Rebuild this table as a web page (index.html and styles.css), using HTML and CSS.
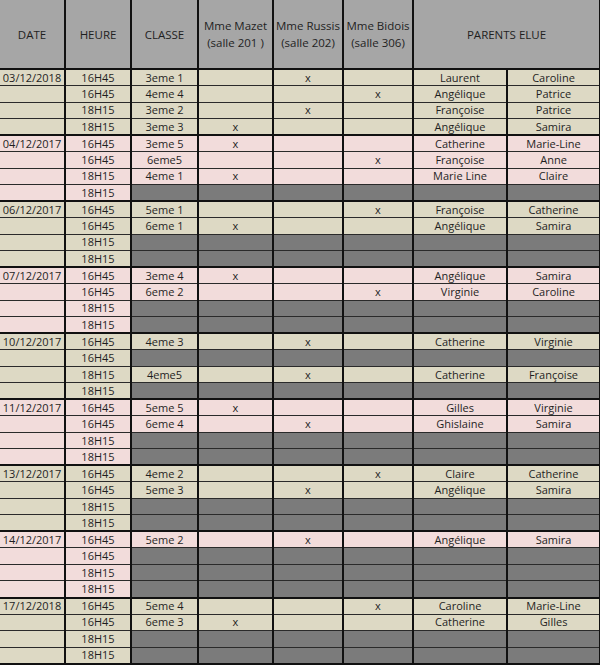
FILE: index.html
```html
<!DOCTYPE html>
<html lang="fr">
<head>
<meta charset="utf-8">
<title>Planning</title>
<link rel="stylesheet" href="styles.css">
</head>
<body>
<table class="plan">
  <colgroup>
    <col class="c-date"><col class="c-heure"><col class="c-classe"><col class="c-prof1"><col class="c-prof2"><col class="c-prof3"><col class="c-par1"><col class="c-par2">
  </colgroup>
  <thead>
    <tr class="head">
      <th>DATE</th><th>HEURE</th><th>CLASSE</th>
      <th>Mme Mazet<br>(salle 201 )</th><th>Mme Russis<br>(salle 202)</th><th>Mme Bidois<br>(salle 306)</th>
      <th colspan="2">PARENTS ELUE</th>
    </tr>
  </thead>
  <tbody class="beige">
    <tr class="first"><td>03/12/2018</td><td>16H45</td><td>3eme 1</td><td></td><td>x</td><td></td><td>Laurent</td><td>Caroline</td></tr>
    <tr><td></td><td>16H45</td><td>4eme 4</td><td></td><td></td><td>x</td><td>Angélique</td><td>Patrice</td></tr>
    <tr><td></td><td>18H15</td><td>3eme 2</td><td></td><td>x</td><td></td><td>Françoise</td><td>Patrice</td></tr>
    <tr><td></td><td>18H15</td><td>3eme 3</td><td>x</td><td></td><td></td><td>Angélique</td><td>Samira</td></tr>
  </tbody>
  <tbody class="pink">
    <tr class="first"><td>04/12/2017</td><td>16H45</td><td>3eme 5</td><td>x</td><td></td><td></td><td>Catherine</td><td>Marie-Line</td></tr>
    <tr><td></td><td>16H45</td><td>6eme5</td><td></td><td></td><td>x</td><td>Françoise</td><td>Anne</td></tr>
    <tr><td></td><td>18H15</td><td>4eme 1</td><td>x</td><td></td><td></td><td>Marie Line</td><td>Claire</td></tr>
    <tr class="off"><td></td><td>18H15</td><td></td><td></td><td></td><td></td><td></td><td></td></tr>
  </tbody>
  <tbody class="beige">
    <tr class="first"><td>06/12/2017</td><td>16H45</td><td>5eme 1</td><td></td><td></td><td>x</td><td>Françoise</td><td>Catherine</td></tr>
    <tr><td></td><td>16H45</td><td>6eme 1</td><td>x</td><td></td><td></td><td>Angélique</td><td>Samira</td></tr>
    <tr class="off"><td></td><td>18H15</td><td></td><td></td><td></td><td></td><td></td><td></td></tr>
    <tr class="off"><td></td><td>18H15</td><td></td><td></td><td></td><td></td><td></td><td></td></tr>
  </tbody>
  <tbody class="pink">
    <tr class="first"><td>07/12/2017</td><td>16H45</td><td>3eme 4</td><td>x</td><td></td><td></td><td>Angélique</td><td>Samira</td></tr>
    <tr><td></td><td>16H45</td><td>6eme 2</td><td></td><td></td><td>x</td><td>Virginie</td><td>Caroline</td></tr>
    <tr class="off"><td></td><td>18H15</td><td></td><td></td><td></td><td></td><td></td><td></td></tr>
    <tr class="off"><td></td><td>18H15</td><td></td><td></td><td></td><td></td><td></td><td></td></tr>
  </tbody>
  <tbody class="beige">
    <tr class="first"><td>10/12/2017</td><td>16H45</td><td>4eme 3</td><td></td><td>x</td><td></td><td>Catherine</td><td>Virginie</td></tr>
    <tr class="off"><td></td><td>16H45</td><td></td><td></td><td></td><td></td><td></td><td></td></tr>
    <tr><td></td><td>18H15</td><td>4eme5</td><td></td><td>x</td><td></td><td>Catherine</td><td>Françoise</td></tr>
    <tr class="off"><td></td><td>18H15</td><td></td><td></td><td></td><td></td><td></td><td></td></tr>
  </tbody>
  <tbody class="pink">
    <tr class="first"><td>11/12/2017</td><td>16H45</td><td>5eme 5</td><td>x</td><td></td><td></td><td>Gilles</td><td>Virginie</td></tr>
    <tr><td></td><td>16H45</td><td>6eme 4</td><td></td><td>x</td><td></td><td>Ghislaine</td><td>Samira</td></tr>
    <tr class="off"><td></td><td>18H15</td><td></td><td></td><td></td><td></td><td></td><td></td></tr>
    <tr class="off"><td></td><td>18H15</td><td></td><td></td><td></td><td></td><td></td><td></td></tr>
  </tbody>
  <tbody class="beige">
    <tr class="first"><td>13/12/2017</td><td>16H45</td><td>4eme 2</td><td></td><td></td><td>x</td><td>Claire</td><td>Catherine</td></tr>
    <tr><td></td><td>16H45</td><td>5eme 3</td><td></td><td>x</td><td></td><td>Angélique</td><td>Samira</td></tr>
    <tr class="off"><td></td><td>18H15</td><td></td><td></td><td></td><td></td><td></td><td></td></tr>
    <tr class="off"><td></td><td>18H15</td><td></td><td></td><td></td><td></td><td></td><td></td></tr>
  </tbody>
  <tbody class="pink">
    <tr class="first"><td>14/12/2017</td><td>16H45</td><td>5eme 2</td><td></td><td>x</td><td></td><td>Angélique</td><td>Samira</td></tr>
    <tr class="off"><td></td><td>16H45</td><td></td><td></td><td></td><td></td><td></td><td></td></tr>
    <tr class="off"><td></td><td>18H15</td><td></td><td></td><td></td><td></td><td></td><td></td></tr>
    <tr class="off"><td></td><td>18H15</td><td></td><td></td><td></td><td></td><td></td><td></td></tr>
  </tbody>
  <tbody class="beige">
    <tr class="first"><td>17/12/2018</td><td>16H45</td><td>5eme 4</td><td></td><td></td><td>x</td><td>Caroline</td><td>Marie-Line</td></tr>
    <tr><td></td><td>16H45</td><td>6eme 3</td><td>x</td><td></td><td></td><td>Catherine</td><td>Gilles</td></tr>
    <tr class="off"><td></td><td>18H15</td><td></td><td></td><td></td><td></td><td></td><td></td></tr>
    <tr class="off merged"><td></td><td>18H15</td><td></td><td></td><td></td><td></td><td></td><td></td></tr>
  </tbody>
</table>
</body>
</html>
```

FILE: styles.css
```css
html, body {
  margin: 0;
  padding: 0;
  background: #ffffff;
}

.plan {
  width: 600px;
  table-layout: fixed;
  border-collapse: collapse;
  font-family: "Open Sans", "Liberation Sans", sans-serif;
  font-size: 11px;
  color: #1f1f1f;
}

.c-date { width: 65px; }
.c-heure { width: 66px; }
.c-classe { width: 67px; }
.c-prof1 { width: 75px; }
.c-prof2 { width: 70px; }
.c-prof3 { width: 70px; }
.c-par1 { width: 94px; }
.c-par2 { width: 93px; }

.plan th,
.plan td {
  padding: 0;
  text-align: center;
  vertical-align: middle;
  white-space: nowrap;
  overflow: hidden;
  line-height: 14px;
  border-left: 2px solid #111;
  border-right: 2px solid #111;
  border-top: 1px solid #2a2a2a;
  border-bottom: 1px solid #2a2a2a;
}

.plan th:first-child,
.plan td:first-child {
  border-left: none;
}

.head {
  height: 69px;
}

.head th {
  background: #a6a6a6;
  font-weight: normal;
  font-size: 11.5px;
  line-height: 17px;
  border-top: none;
  border-bottom: 2px solid #111;
}

.plan tbody tr {
  height: 16.52px;
}

.plan tbody tr.first td {
  border-top: 2px solid #111;
}

.beige td { background: #ddd9c4; }
.pink td { background: #f2dcdb; }

.plan tr.off td:nth-child(n+3) {
  background: #7b7b7b;
}

.plan tr.merged td {
  border-top: 1px solid transparent;
}
.plan tr.merged td:nth-child(-n+2) {
  border-top-color: #ddd9c4;
}
.plan tr.merged td:nth-child(n+3) {
  border-top-color: #7b7b7b;
}
.plan tbody:last-child tr:last-child td {
  border-bottom: 2px solid #111;
}
```
